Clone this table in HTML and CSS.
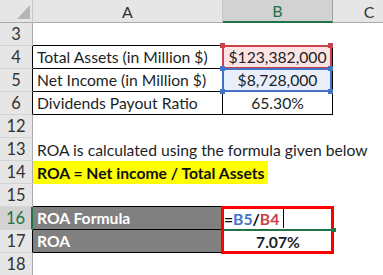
FILE: index.html
```html
<!DOCTYPE html>
<html>
<head>
<meta charset="utf-8">
<link rel="stylesheet" href="styles.css">
</head>
<body>
<div class="sheet">
  <div class="corner"><svg width="33" height="23" viewBox="0 0 33 23"><polygon points="17,19 30,19 30,5" fill="#b5b5b5"/></svg></div>
  <div class="ch">A</div>
  <div class="ch sel">B</div>
  <div class="ch last">C</div>

  <div class="rh">3</div><div class="c bb"></div><div class="c bb"></div><div class="c"></div>

  <div class="rh blk">4</div><div class="c bb br">Total Assets (in Million $)</div><div class="c bb br ctr hl-red">$123,382,000</div><div class="c"></div>

  <div class="rh blk">5</div><div class="c bb br">Net Income (in Million $)</div><div class="c bb br ctr hl-blue">$8,728,000</div><div class="c"></div>

  <div class="rh blk">6</div><div class="c bb br">Dividends Payout Ratio</div><div class="c bb br ctr">65.30%</div><div class="c"></div>

  <div class="rh">12</div><div class="c"></div><div class="c"></div><div class="c"></div>

  <div class="rh">13</div><div class="c over">ROA is calculated using the formula given below</div><div class="c"></div><div class="c"></div>

  <div class="rh">14</div><div class="c over"><span class="mark">ROA = Net income / Total Assets</span></div><div class="c"></div><div class="c"></div>

  <div class="rh">15</div><div class="c bb"></div><div class="c bb"></div><div class="c"></div>

  <div class="rh rsel">16</div><div class="c bb br dark">ROA Formula</div><div class="c active"><span class="eq">=</span><span class="rb">B5</span><span class="eq">/</span><span class="rr">B4</span><span class="caret"></span><span class="handle"></span></div><div class="c"></div>

  <div class="rh blk">17</div><div class="c bb br dark">ROA</div><div class="c ctr bold">7.07%</div><div class="c"></div>

  <div class="rh">18</div><div class="c"></div><div class="c"></div><div class="c"></div>
</div>
</body>
</html>
```
FILE: styles.css
```css
html, body {
  margin: 0;
  padding: 0;
  background: #ffffff;
}
.sheet {
  width: 383px;
  height: 275px;
  overflow: hidden;
  display: grid;
  grid-template-columns: 33px 190px 110px 72px;
  grid-auto-rows: 23px;
  font-family: Lato, "Open Sans", sans-serif;
  font-size: 15.7px;
  color: #1b1f27;
}
.corner {
  background: #e6e6e6;
  border-bottom: 1px solid #ababab;
  border-right: 1px solid #c8c8c8;
  box-sizing: border-box;
  overflow: hidden;
}
.corner svg { display: block; }
.ch {
  background: #e6e6e6;
  border-bottom: 1px solid #ababab;
  border-right: 1px solid #c8c8c8;
  box-sizing: border-box;
  display: flex;
  align-items: center;
  justify-content: center;
  color: #333333;
  font-size: 16px;
}
.ch.sel {
  background: #d2d2d2;
  border-bottom: 2px solid #217346;
  border-right: 1px solid #9e9e9e;
  color: #217346;
}
.ch.last { border-right: none; }
.rh {
  background: #e6e6e6;
  border-bottom: 1px solid #d4d4d4;
  border-right: 1px solid #ababab;
  box-sizing: border-box;
  display: flex;
  align-items: center;
  justify-content: center;
  color: #333333;
  font-size: 16.5px;
}
.rh.blk { border-right-color: #000000; }
.rh.rsel {
  background: #d2d2d2;
  color: #217346;
  border-right: 2px solid #217346;
}
.c {
  box-sizing: border-box;
  display: flex;
  align-items: center;
  padding-left: 4px;
  white-space: nowrap;
  position: relative;
}
.c.ctr { justify-content: center; padding-left: 0; }
.c.bb { border-bottom: 1px solid #000000; }
.c.br { border-right: 1px solid #000000; }
.c.over { overflow: visible; z-index: 1; }
.c.bold { font-weight: 700; }
.mark {
  background: #ffff00;
  font-weight: 700;
  display: flex;
  align-items: center;
  height: 23px;
  margin-left: -4px;
  padding: 0 4px;
  color: #111111;
}
.hl-red { background: #fce4e5; }
.hl-blue { background: #e9effa; }
.hl-red::before, .hl-blue::before {
  content: "";
  position: absolute;
  top: -1px;
  left: -1px;
  right: 0;
  bottom: -1px;
  border: 2px solid #c8414b;
  box-sizing: border-box;
}
.hl-blue::before { border-color: #4472c4; }
.hl-red::after, .hl-blue::after {
  content: "";
  position: absolute;
  width: 5px;
  height: 5px;
  left: -3px;
  top: -3px;
  background: #c8414b;
  box-shadow: 108px 0 0 #c8414b, 0 23px 0 #c8414b, 108px 23px 0 #c8414b;
  z-index: 2;
}
.hl-blue::after {
  background: #4472c4;
  box-shadow: 108px 0 0 #4472c4, 0 23px 0 #4472c4, 108px 23px 0 #4472c4;
}
.dark {
  background: #808080;
  color: #ffffff;
  font-weight: 700;
}
.active {
  font-weight: 700;
  padding-left: 1px;
}
.active::before {
  content: "";
  position: absolute;
  left: -2px;
  top: -1px;
  width: 113px;
  height: 48px;
  border: 3px solid #ff0000;
  box-sizing: border-box;
  z-index: 3;
}
.active::after {
  content: "";
  position: absolute;
  left: 1px;
  right: 0;
  bottom: -1px;
  height: 2px;
  background: #217346;
  z-index: 4;
}
.handle {
  position: absolute;
  right: -3px;
  bottom: -2px;
  width: 4px;
  height: 4px;
  background: #217346;
  z-index: 4;
}
.eq { color: #000000; }
.rb { color: #4472c4; }
.rr { color: #c8414b; }
.caret {
  display: inline-block;
  width: 1px;
  height: 19px;
  background: #000000;
  margin-left: 4px;
}
```
